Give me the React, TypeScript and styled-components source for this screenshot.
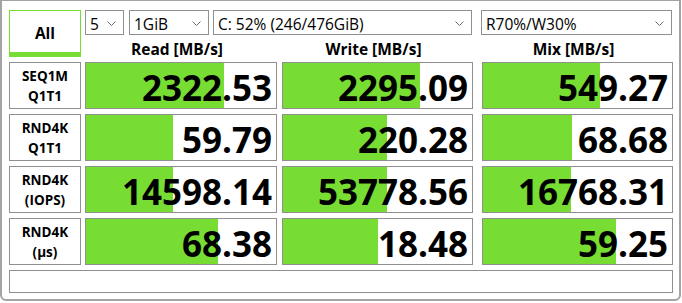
import React from 'react';
import styled, { createGlobalStyle } from 'styled-components';

const GREEN = '#77dd33';
const FONT = '"Open Sans", "Noto Sans", "Liberation Sans", sans-serif';

const Global = createGlobalStyle`
  html, body { margin: 0; padding: 0; background: #fff; }
  body { font-family: ${FONT}; color: #000; }
`;

const Window = styled.div`
  box-sizing: border-box;
  width: 681px;
  height: 301px;
  border: 1px solid #a3a3a3;
  border-left-width: 2px;
  border-right-width: 2px;
  border-bottom-width: 2px;
  border-radius: 0 0 6px 6px;
  background: #fff;
  padding: 9px 0 0 7px;
  display: flex;
  flex-direction: column;
  gap: 5px;
`;

const Top = styled.div`
  display: flex;
  height: 47px;
`;

const AllButton = styled.div`
  box-sizing: border-box;
  width: 72px;
  height: 47px;
  border: 1px solid ${GREEN};
  border-bottom-width: 5px;
  display: flex;
  align-items: center;
  justify-content: center;
  padding-top: 3px;
  font-size: 15.5px;
  font-weight: 700;
`;

const TopRight = styled.div`
  display: flex;
  flex-direction: column;
`;

const SelectRow = styled.div`
  display: flex;
  height: 25px;
`;

const Select = styled.div<{ $w: number; $ml: number }>`
  box-sizing: border-box;
  width: ${(p) => p.$w}px;
  margin-left: ${(p) => p.$ml}px;
  height: 25px;
  border: 1px solid #8f8f8f;
  background: #fff;
  display: flex;
  align-items: center;
  justify-content: space-between;
  padding: 2px 7px 0 4px;
  font-size: 15.5px;
  white-space: nowrap;
`;

const HeaderRow = styled.div`
  display: flex;
  height: 22px;
  align-items: flex-start;
`;

const Header = styled.div<{ $w: number; $ml: number }>`
  width: ${(p) => p.$w}px;
  margin-left: ${(p) => p.$ml}px;
  text-align: center;
  font-size: 15.5px;
  font-weight: 700;
  line-height: 20px;
  padding-top: 4px;
`;

const Row = styled.div`
  display: flex;
  height: 47px;
`;

const Label = styled.div`
  box-sizing: border-box;
  width: 72px;
  height: 47px;
  border: 1px solid #8f8f8f;
  display: flex;
  flex-direction: column;
  align-items: center;
  justify-content: center;
  font-size: 13.5px;
  font-weight: 700;
  line-height: 20px;
`;

const Cell = styled.div<{ $w: number; $ml: number }>`
  box-sizing: border-box;
  width: ${(p) => p.$w}px;
  margin-left: ${(p) => p.$ml}px;
  height: 47px;
  border: 1px solid #8f8f8f;
  background: linear-gradient(90deg, ${GREEN} var(--fill), #fff var(--fill));
  display: flex;
  align-items: center;
  justify-content: flex-end;
  padding: 3px 4px 0 0;
  font-size: 35px;
  font-weight: 700;
  line-height: 1;
  overflow: hidden;
  white-space: nowrap;
`;

const Status = styled.div`
  box-sizing: border-box;
  width: 664px;
  height: 23px;
  border: 1px solid #8f8f8f;
`;

const Chevron = () => (
  <svg width="9" height="5" viewBox="0 0 9 5">
    <polyline points="0.5,0.5 4.5,4.5 8.5,0.5" fill="none" stroke="#6a6a6a" strokeWidth="1" />
  </svg>
);

const cols = [
  { w: 192, ml: 4, title: 'Read [MB/s]' },
  { w: 191, ml: 5, title: 'Write [MB/s]' },
  { w: 191, ml: 9, title: 'Mix [MB/s]' },
];

const selects = [
  { w: 39, ml: 4, text: '5' },
  { w: 80, ml: 5, text: '1GiB' },
  { w: 259, ml: 4, text: 'C: 52% (246/476GiB)' },
  { w: 191, ml: 9, text: 'R70%/W30%' },
];

const rows = [
  { l1: 'SEQ1M', l2: 'Q1T1', v: ['2322.53', '2295.09', '549.27'], f: [72.6, 72.5, 62] },
  { l1: 'RND4K', l2: 'Q1T1', v: ['59.79', '220.28', '68.68'], f: [45.8, 55, 47] },
  { l1: 'RND4K', l2: '(IOPS)', v: ['14598.14', '53778.56', '16768.31'], f: [45.8, 55, 46.6] },
  { l1: 'RND4K', l2: '(µs)', v: ['68.38', '18.48', '59.25'], f: [69.5, 50, 70.4] },
];

export default function App() {
  return (
    <>
      <Global />
      <Window>
        <Top>
          <AllButton>All</AllButton>
          <TopRight>
            <SelectRow>
              {selects.map((s, i) => (
                <Select key={i} $w={s.w} $ml={s.ml}>
                  <span>{s.text}</span>
                  <Chevron />
                </Select>
              ))}
            </SelectRow>
            <HeaderRow>
              {cols.map((c, i) => (
                <Header key={i} $w={c.w} $ml={i === 0 ? 0 : c.ml}>
                  {c.title}
                </Header>
              ))}
            </HeaderRow>
          </TopRight>
        </Top>
        {rows.map((r, ri) => (
          <Row key={ri}>
            <Label>
              <span>{r.l1}</span>
              <span>{r.l2}</span>
            </Label>
            {cols.map((c, ci) => (
              <Cell
                key={ci}
                $w={c.w}
                $ml={c.ml}
                style={{ ['--fill' as any]: `${r.f[ci]}%` }}
              >
                {r.v[ci]}
              </Cell>
            ))}
          </Row>
        ))}
        <Status />
      </Window>
    </>
  );
}
